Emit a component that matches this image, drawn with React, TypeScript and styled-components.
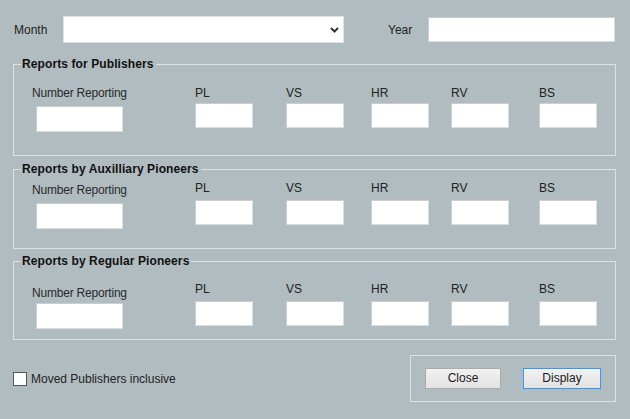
import React from "react";
import styled, { createGlobalStyle } from "styled-components";

const Global = createGlobalStyle`
  html, body {
    margin: 0;
    padding: 0;
    background: #b1bcc0;
  }
  body {
    font-family: "Liberation Sans", Arial, sans-serif;
    font-size: 12px;
    color: #222;
  }
  * { box-sizing: border-box; }
`;

const Page = styled.div`
  width: 630px;
  height: 419px;
  padding: 16px 0 0 13px;
  background: #b1bcc0;
  display: flex;
  flex-direction: column;
`;

const TopRow = styled.div`
  display: flex;
  align-items: center;
  height: 27px;
  width: 603px;
`;

const FieldLabel = styled.span<{ $w: number; $ml?: number }>`
  width: ${(p) => p.$w}px;
  margin-left: ${(p) => p.$ml ?? 0}px;
  line-height: 14px;
  color: #222;
  padding-left: 1px;
`;

const Combo = styled.div`
  width: 281px;
  height: 27px;
  background: #fff;
  border: 1px solid #dfe3e5;
  display: flex;
  align-items: center;
  justify-content: flex-end;
  padding-right: 4px;
`;

const TextBox = styled.div<{ $w: number; $h: number }>`
  width: ${(p) => p.$w}px;
  height: ${(p) => p.$h}px;
  background: #fff;
  border: 1px solid #d8dde0;
  border-top-color: #c9ced1;
  border-left-color: #c9ced1;
`;

const Group = styled.fieldset<{ $mt: number; $pt: number; $pb: number }>`
  margin: ${(p) => p.$mt}px 0 0 0;
  width: 603px;
  border: 1px solid #dde3e5;
  padding: ${(p) => p.$pt}px 0 ${(p) => p.$pb}px 0;
  min-width: 0;
`;

const Legend = styled.legend`
  margin-left: 7px;
  padding: 0 2px 0 1px;
  font-weight: bold;
  line-height: 14px;
  font-size: 12px;
  color: #111;
  letter-spacing: 0.1px;
`;

const Columns = styled.div`
  display: grid;
  grid-template-columns: 163px 91px 85px 80px 88px 58px;
  align-items: start;
  padding-left: 18px;
`;

const Col = styled.div<{ $shift: number; $gap: number }>`
  display: flex;
  flex-direction: column;
  margin-top: ${(p) => p.$shift}px;
  gap: ${(p) => p.$gap}px;
`;

const ColLabel = styled.span`
  line-height: 14px;
  color: #222;
`;

const NumLabel = styled(ColLabel)`
  color: #2a2a2a;
  letter-spacing: -0.2px;
`;

const NumBox = styled(TextBox)`
  margin-left: 4px;
`;

const BottomRow = styled.div`
  display: flex;
  align-items: center;
  width: 603px;
  margin-top: 15px;
`;

const Check = styled.span`
  width: 14px;
  height: 14px;
  background: #fff;
  border: 1px solid #555;
  margin-right: 4px;
`;

const CheckText = styled.span`
  line-height: 14px;
  color: #222;
`;

const ButtonBox = styled.div`
  margin-left: auto;
  width: 206px;
  height: 47px;
  border: 1px solid #dde3e5;
  display: flex;
  align-items: center;
  padding-left: 14px;
  gap: 22px;
`;

const Btn = styled.button<{ $w: number; $default?: boolean }>`
  width: ${(p) => p.$w}px;
  height: 21px;
  margin-top: -1px;
  padding: 0;
  font-family: "Liberation Sans", Arial, sans-serif;
  font-size: 12px;
  color: #1a1a1a;
  background: linear-gradient(#f1f1f1, #e3e3e3);
  border: 1px solid ${(p) => (p.$default ? "#3399ff" : "#acacac")};
  border-radius: 0;
`;

type Cfg = {
  title: string;
  mt: number;
  pt: number;
  pb: number;
  numShift: number;
  numGap: number;
  gap: number;
};

const groups: Cfg[] = [
  { title: "Reports for Publishers", mt: 14, pt: 15, pb: 23, numShift: 0, numGap: 6, gap: 3 },
  { title: "Reports by Auxilliary Pioneers", mt: 6, pt: 5, pb: 19, numShift: 2, numGap: 6, gap: 5 },
  { title: "Reports by Regular Pioneers", mt: 5, pt: 14, pb: 10, numShift: 4, numGap: 3, gap: 5 },
];

const fields = ["PL", "VS", "HR", "RV", "BS"];

const Chevron = () => (
  <svg width="9" height="6" viewBox="0 0 9 6">
    <path d="M1 1 L4.5 4.5 L8 1" fill="none" stroke="#333" strokeWidth="2" />
  </svg>
);

export default function App() {
  return (
    <Page>
      <Global />
      <TopRow>
        <FieldLabel $w={50}>Month</FieldLabel>
        <Combo>
          <Chevron />
        </Combo>
        <FieldLabel $w={41} $ml={43}>Year</FieldLabel>
        <TextBox $w={187} $h={25} />
      </TopRow>
      {groups.map((g) => (
        <Group key={g.title} $mt={g.mt} $pt={g.pt} $pb={g.pb}>
          <Legend>{g.title}</Legend>
          <Columns>
            <Col $shift={g.numShift} $gap={g.numGap}>
              <NumLabel>Number Reporting</NumLabel>
              <NumBox $w={87} $h={26} />
            </Col>
            {fields.map((f) => (
              <Col key={f} $shift={0} $gap={g.gap}>
                <ColLabel>{f}</ColLabel>
                <TextBox $w={58} $h={25} />
              </Col>
            ))}
          </Columns>
        </Group>
      ))}
      <BottomRow>
        <Check />
        <CheckText>Moved Publishers inclusive</CheckText>
        <ButtonBox>
          <Btn $w={76}>Close</Btn>
          <Btn $w={78} $default>Display</Btn>
        </ButtonBox>
      </BottomRow>
    </Page>
  );
}
